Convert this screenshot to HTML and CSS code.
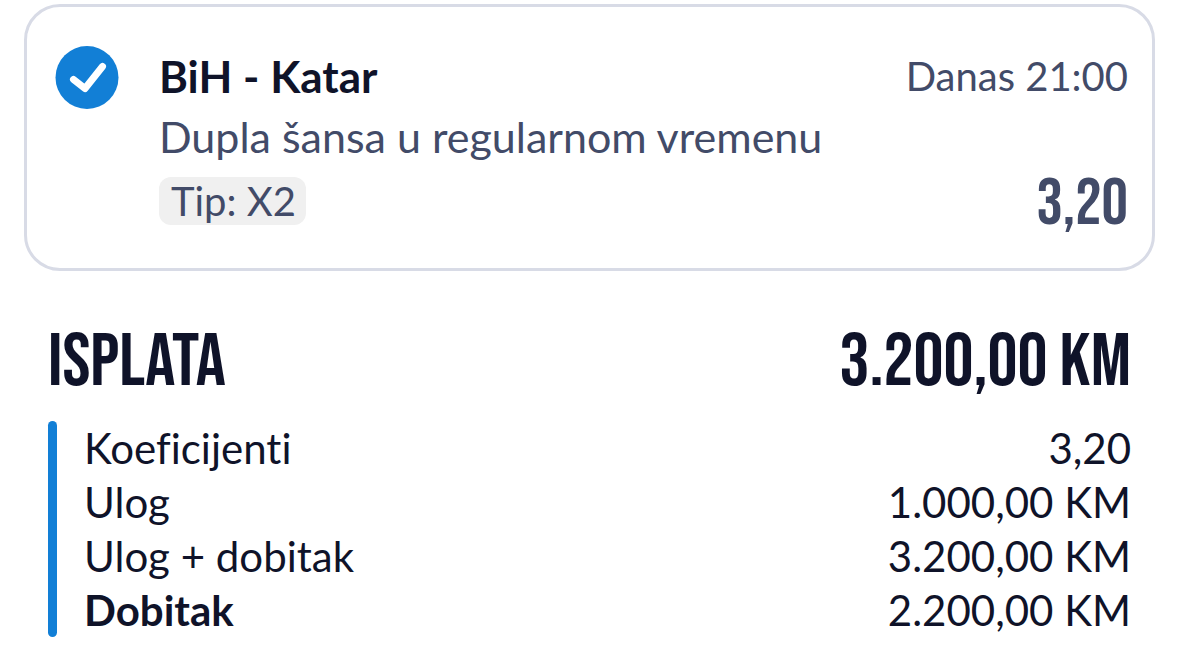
FILE: index.html
```html
<!DOCTYPE html>
<html lang="bs">
<head>
<meta charset="utf-8">
<meta name="viewport" content="width=device-width, initial-scale=1">
<title>Isplata</title>
<link rel="stylesheet" href="styles.css">
</head>
<body>
<main class="ticket">
  <article class="bet">
    <svg class="bet-status" viewBox="0 0 64 64" role="img" aria-label="Dobitan">
      <circle cx="32" cy="31.500" r="31.500"/>
      <path d="M18.500 33.500L30 42.500L47.500 20.500"/>
    </svg>
    <div class="bet-body">
      <div class="bet-row">
        <h2 class="match">BiH - Katar</h2>
        <time class="time">Danas 21:00</time>
      </div>
      <p class="market">Dupla šansa u regularnom vremenu</p>
      <div class="bet-foot">
        <span class="tip">Tip: X2</span>
        <span class="odds">3,20</span>
      </div>
    </div>
  </article>
  <section class="payout">
    <div class="payout-head">
      <h1 class="payout-title">ISPLATA</h1>
      <strong class="payout-title">3.200,00 KM</strong>
    </div>
    <div class="breakdown">
      <div class="accent"></div>
      <dl class="details">
        <div class="detail"><dt>Koeficijenti</dt><dd>3,20</dd></div>
        <div class="detail"><dt>Ulog</dt><dd>1.000,00 KM</dd></div>
        <div class="detail"><dt>Ulog + dobitak</dt><dd>3.200,00 KM</dd></div>
        <div class="detail"><dt class="strong">Dobitak</dt><dd>2.200,00 KM</dd></div>
      </dl>
    </div>
  </section>
</main>
</body>
</html>
```
FILE: styles.css
```css
* { box-sizing: border-box; }

body {
  margin: 0;
  background: #fff;
  color: #0f1329;
  font-family: "Proxima Nova", Lato, sans-serif;
  font-size: 42px;
  font-variant-ligatures: none;
}

h1, h2, p, dl, dd { margin: 0; }

.ticket { padding: 4px 24px 16px; }

.bet {
  display: flex;
  gap: 40px;
  padding: 39px 24px 30px 28px;
  border: 3px solid #d8dbe6;
  border-radius: 36px;
  color: #424b68;
}

.bet-status {
  flex: none;
  width: 64px;
  height: 64px;
}
.bet-status circle { fill: #127fd6; }
.bet-status path {
  fill: none;
  stroke: #fff;
  stroke-width: 7;
  stroke-linecap: round;
  stroke-linejoin: round;
}

.bet-body { flex: 1; }

.bet-row, .bet-foot {
  display: flex;
  align-items: center;
  justify-content: space-between;
}

.bet-foot { align-items: flex-start; }

.match {
  color: #0f1329;
  font-size: 44px;
  line-height: 58px;
}

.time {
  font-size: 40px;
  line-height: 60px;
}

.market {
  font-size: 43px;
  line-height: 62px;
}

.tip {
  margin-top: 9px;
  padding: 0 10px 0 12px;
  border-radius: 12px;
  background: #f0f0f0;
  font-size: 40px;
  line-height: 48px;
}

.odds, .payout-title {
  font-family: "Bebas Neue", "Roboto Condensed", "Open Sans Condensed", "DejaVu Sans Condensed", sans-serif;
  font-weight: 400;
}

.odds {
  padding-top: 4px;
  font-size: 66px;
  line-height: 66px;
}

.payout { padding: 54px 24px 0; }

.payout-head {
  display: flex;
  justify-content: space-between;
}

.payout-title {
  font-size: 75px;
  line-height: 76px;
}

.breakdown {
  display: flex;
  gap: 27px;
  margin-top: 20px;
}

.accent {
  width: 9px;
  border-radius: 5px;
  background: #127fd6;
}

.details { flex: 1; }

.detail {
  display: flex;
  justify-content: space-between;
  line-height: 54px;
}

.strong { font-weight: 700; }
```
